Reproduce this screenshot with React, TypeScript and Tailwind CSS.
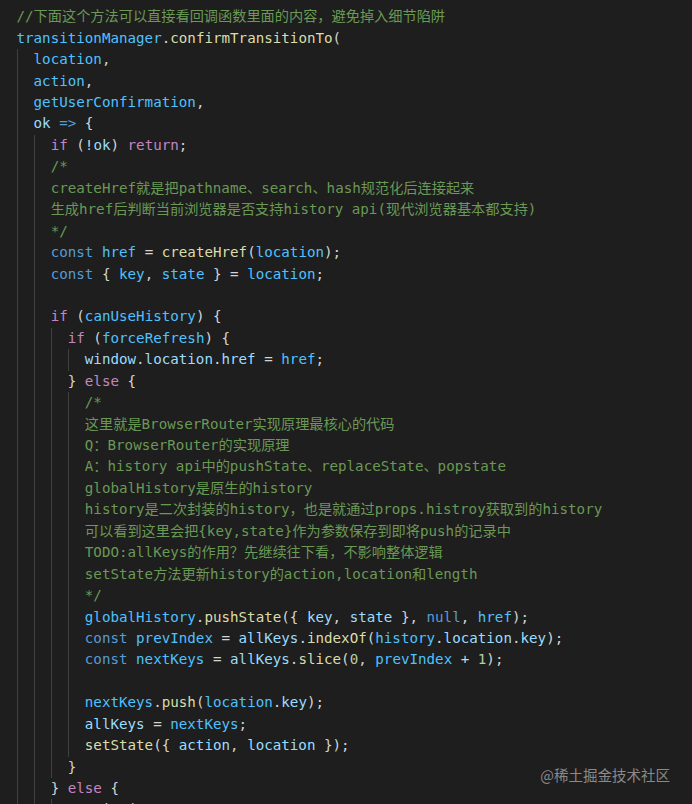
import React from 'react';

// token colours, VS Code Dark+ style
const colors: Record<string, string> = {
  c: 'text-[#6a9955]', // comment
  k: 'text-[#569cd6]', // keyword / storage
  p: 'text-[#c586c0]', // control flow
  v: 'text-[#9cdcfe]', // variable / property
  b: 'text-[#4fc1ff]', // constant
  f: 'text-[#dcdcaa]', // function
  d: 'text-[#d4d4d4]', // punctuation
  n: 'text-[#b5cea8]', // number
};

type Line = { indent: number; tokens: [string, string][] };

const lines: Line[] = [
  { indent: 0, tokens: [['c', '//下面这个方法可以直接看回调函数里面的内容，避免掉入细节陷阱']] },
  { indent: 0, tokens: [['b', 'transitionManager'], ['d', '.'], ['f', 'confirmTransitionTo'], ['d', '(']] },
  { indent: 1, tokens: [['b', 'location'], ['d', ',']] },
  { indent: 1, tokens: [['b', 'action'], ['d', ',']] },
  { indent: 1, tokens: [['b', 'getUserConfirmation'], ['d', ',']] },
  { indent: 1, tokens: [['v', 'ok'], ['d', ' '], ['k', '=>'], ['d', ' {']] },
  { indent: 2, tokens: [['p', 'if'], ['d', ' (!'], ['v', 'ok'], ['d', ') '], ['p', 'return'], ['d', ';']] },
  { indent: 2, tokens: [['c', '/*']] },
  { indent: 2, tokens: [['c', 'createHref就是把pathname、search、hash规范化后连接起来']] },
  { indent: 2, tokens: [['c', '生成href后判断当前浏览器是否支持history api(现代浏览器基本都支持)']] },
  { indent: 2, tokens: [['c', '*/']] },
  { indent: 2, tokens: [['k', 'const'], ['d', ' '], ['b', 'href'], ['d', ' = '], ['f', 'createHref'], ['d', '('], ['b', 'location'], ['d', ');']] },
  { indent: 2, tokens: [['k', 'const'], ['d', ' { '], ['b', 'key'], ['d', ', '], ['b', 'state'], ['d', ' } = '], ['b', 'location'], ['d', ';']] },
  { indent: 2, tokens: [] },
  { indent: 2, tokens: [['p', 'if'], ['d', ' ('], ['b', 'canUseHistory'], ['d', ') {']] },
  { indent: 3, tokens: [['p', 'if'], ['d', ' ('], ['b', 'forceRefresh'], ['d', ') {']] },
  { indent: 4, tokens: [['v', 'window'], ['d', '.'], ['v', 'location'], ['d', '.'], ['v', 'href'], ['d', ' = '], ['b', 'href'], ['d', ';']] },
  { indent: 3, tokens: [['d', '} '], ['p', 'else'], ['d', ' {']] },
  { indent: 4, tokens: [['c', '/*']] },
  { indent: 4, tokens: [['c', '这里就是BrowserRouter实现原理最核心的代码']] },
  { indent: 4, tokens: [['c', 'Q：BrowserRouter的实现原理']] },
  { indent: 4, tokens: [['c', 'A：history api中的pushState、replaceState、popstate']] },
  { indent: 4, tokens: [['c', 'globalHistory是原生的history']] },
  { indent: 4, tokens: [['c', 'history是二次封装的history，也是就通过props.histroy获取到的history']] },
  { indent: 4, tokens: [['c', '可以看到这里会把{key,state}作为参数保存到即将push的记录中']] },
  { indent: 4, tokens: [['c', 'TODO:allKeys的作用？先继续往下看，不影响整体逻辑']] },
  { indent: 4, tokens: [['c', 'setState方法更新history的action,location和length']] },
  { indent: 4, tokens: [['c', '*/']] },
  { indent: 4, tokens: [['b', 'globalHistory'], ['d', '.'], ['f', 'pushState'], ['d', '({ '], ['v', 'key'], ['d', ', '], ['v', 'state'], ['d', ' }, '], ['k', 'null'], ['d', ', '], ['b', 'href'], ['d', ');']] },
  { indent: 4, tokens: [['k', 'const'], ['d', ' '], ['b', 'prevIndex'], ['d', ' = '], ['v', 'allKeys'], ['d', '.'], ['f', 'indexOf'], ['d', '('], ['b', 'history'], ['d', '.'], ['v', 'location'], ['d', '.'], ['v', 'key'], ['d', ');']] },
  { indent: 4, tokens: [['k', 'const'], ['d', ' '], ['b', 'nextKeys'], ['d', ' = '], ['v', 'allKeys'], ['d', '.'], ['f', 'slice'], ['d', '('], ['n', '0'], ['d', ', '], ['b', 'prevIndex'], ['d', ' + '], ['n', '1'], ['d', ');']] },
  { indent: 4, tokens: [] },
  { indent: 4, tokens: [['b', 'nextKeys'], ['d', '.'], ['f', 'push'], ['d', '('], ['b', 'location'], ['d', '.'], ['v', 'key'], ['d', ');']] },
  { indent: 4, tokens: [['v', 'allKeys'], ['d', ' = '], ['b', 'nextKeys'], ['d', ';']] },
  { indent: 4, tokens: [['f', 'setState'], ['d', '({ '], ['v', 'action'], ['d', ', '], ['v', 'location'], ['d', ' });']] },
  { indent: 3, tokens: [['d', '}']] },
  { indent: 2, tokens: [['d', '} '], ['p', 'else'], ['d', ' {']] },
  { indent: 3, tokens: [['f', 'warning'], ['d', '(']] },
];

function CodeLine({ line }: { line: Line }) {
  return (
    <div className="flex h-[21.45px] items-stretch whitespace-pre">
      {Array.from({ length: line.indent }).map((_, i) => (
        <span key={i} className="w-[2ch] shrink-0 border-l border-[#404040]" />
      ))}
      <span className="leading-[21.45px]">
        {line.tokens.map(([c, t], i) => (
          <span key={i} className={colors[c]}>
            {t}
          </span>
        ))}
      </span>
    </div>
  );
}

export default function App() {
  return (
    <div className="relative h-[804px] w-[692px] overflow-hidden bg-[#1e1e1e]">
      <div
        className="pl-[16.5px] pt-[6.3px] text-[14.2px]"
        style={{ fontFamily: '"DejaVu Sans Mono", "Noto Sans CJK SC", monospace' }}
      >
        {lines.map((line, i) => (
          <CodeLine key={i} line={line} />
        ))}
      </div>
      <div className="absolute bottom-[18px] right-[22px] text-[14.5px] text-[#8a8a8a] [font-family:'Noto_Sans_CJK_SC',sans-serif]">
        @稀土掘金技术社区
      </div>
    </div>
  );
}
